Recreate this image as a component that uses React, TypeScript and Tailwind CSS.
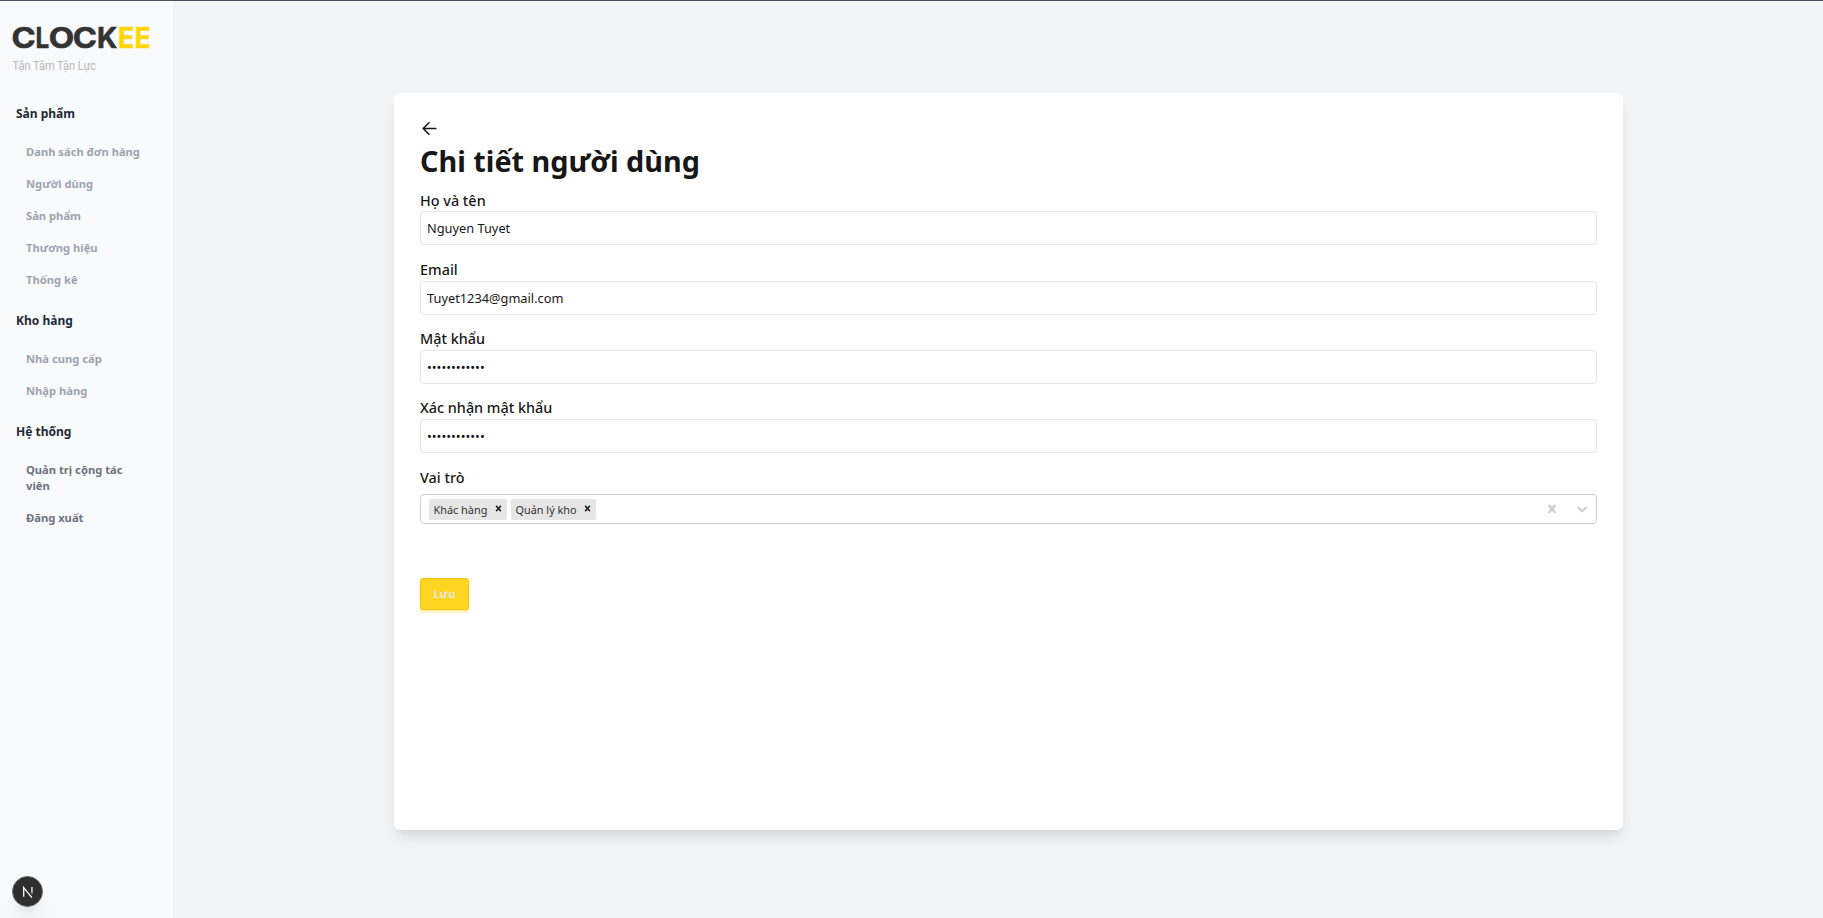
import { ReactNode } from "react";

type Section = { title: string; strong?: boolean; items: string[] };

const sections: Section[] = [
  { title: "Sản phẩm", items: ["Danh sách đơn hàng", "Người dùng", "Sản phẩm", "Thương hiệu", "Thống kê"] },
  { title: "Kho hàng", items: ["Nhà cung cấp", "Nhập hàng"] },
  { title: "Hệ thống", strong: true, items: ["Quản trị cộng tác viên", "Đăng xuất"] },
];

const wordmark = [
  { char: "C", x: -0.5, width: 24.2, fill: "#333333" },
  { char: "L", x: 23.6, width: 13.7, fill: "#333333" },
  { char: "O", x: 36.8, width: 25.5, fill: "#333333" },
  { char: "C", x: 60.8, width: 24.2, fill: "#333333" },
  { char: "K", x: 85, width: 20.3, fill: "#333333" },
  { char: "E", x: 106, width: 16.2, fill: "#ffd60a" },
  { char: "E", x: 122.8, width: 15.8, fill: "#ffd60a" },
];

function Logo() {
  return (
    <svg width="150" height="50" viewBox="0 0 150 50" className="ml-3 block overflow-visible">
      <g fontFamily="Inter" fontWeight="700" fontSize="28.6">
        {wordmark.map((l) => (
          <text key={l.x} x={l.x} y="25.2" textLength={l.width} lengthAdjust="spacingAndGlyphs" fill={l.fill} stroke={l.fill} strokeWidth="0.6">
            {l.char}
          </text>
        ))}
      </g>
      <text x="0.5" y="47" fontFamily="Roboto" fontSize="12" textLength="83.5" lengthAdjust="spacingAndGlyphs" fill="#b8b8b8">Tận Tâm Tận Lực</text>
    </svg>
  );
}

function Sidebar() {
  return (
    <aside className="flex w-[173px] shrink-0 flex-col bg-[#f9fafc]">
      <div className="h-[98px] pt-[22px]">
        <Logo />
      </div>
      <nav>
        {sections.map((s) => (
          <div key={s.title} className="mb-[10px]">
            <h2 className="mb-[7px] flex h-[30px] items-center pl-4 text-[12px] font-bold text-[#1f2937]">{s.title}</h2>
            {s.items.map((item) => (
              <a
                key={item}
                className={
                  "block py-2 pl-[26px] pr-8 text-[11.2px] font-bold leading-4 " +
                  (s.strong ? "text-[#6b7280]" : "text-[#9ca3af]")
                }
              >
                {item}
              </a>
            ))}
          </div>
        ))}
      </nav>
      <div className="mb-[11px] ml-3 mt-auto flex size-[31px] items-center justify-center rounded-full border border-[#6b6b6b] bg-[#2e2e2e] shadow-xl">
        <svg width="12" height="12" viewBox="0 0 12 12" fill="none">
          <defs>
            <linearGradient id="fade" x1="0" y1="0" x2="0" y2="1">
              <stop offset="0.5" stopColor="#fff" />
              <stop offset="1" stopColor="#fff" stopOpacity="0.1" />
            </linearGradient>
          </defs>
          <path d="M1.7 10.8V1.6L9.9 11.6" stroke="#fff" strokeWidth="1.3" />
          <path d="M9.3 1h1.3v8H9.3z" fill="url(#fade)" />
        </svg>
      </div>
    </aside>
  );
}

function Field({ label, children }: { label: string; children: ReactNode }) {
  return (
    <div className="flex flex-col">
      <label className="-mt-[0.55px] mb-[0.55px] h-[21px] text-[14.4px] font-medium leading-[21px]">{label}</label>
      {children}
    </div>
  );
}

function Input({ value, type = "text" }: { value: string; type?: string }) {
  return (
    <input
      type={type}
      defaultValue={value}
      className="h-[34px] w-full rounded-[4px] border border-gray-200 bg-white px-[6px] text-[12.8px] outline-none"
    />
  );
}

const CROSS =
  "M14.348 14.849c-0.469 0.469-1.229 0.469-1.697 0l-2.651-3.030-2.651 3.029c-0.469 0.469-1.229 0.469-1.697 0-0.469-0.469-0.469-1.229 0-1.697l2.758-3.15-2.759-3.152c-0.469-0.469-0.469-1.228 0-1.697s1.228-0.469 1.697 0l2.652 3.031 2.651-3.031c0.469-0.469 1.228-0.469 1.697 0s0.469 1.229 0 1.697l-2.758 3.152 2.758 3.15c0.469 0.469 0.469 1.229 0 1.698z";
const CHEVRON =
  "M4.516 7.548c0.436-0.446 1.043-0.481 1.576 0l3.908 3.747 3.908-3.747c0.533-0.481 1.141-0.446 1.574 0 0.436 0.445 0.408 1.197 0 1.615-0.406 0.418-4.695 4.502-4.695 4.502-0.217 0.223-0.502 0.335-0.787 0.335s-0.57-0.112-0.789-0.335c0 0-4.287-4.084-4.695-4.502s-0.436-1.17 0-1.615z";

function Glyph({ d, size }: { d: string; size: number }) {
  return (
    <svg width={size} height={size} viewBox="0 0 20 20" fill="currentColor" stroke="currentColor" strokeWidth="0.5" className="shrink-0">
      <path d={d} />
    </svg>
  );
}

function Tag({ text, width }: { text: string; width: string }) {
  return (
    <div className={"flex h-[21px] items-center justify-between rounded-[2px] bg-[#e6e6e6] pl-[4.5px] pr-[3px] " + width}>
      <span className="whitespace-nowrap pt-px text-[10.88px] leading-5 text-[#333333]">{text}</span>
      <span className="-mt-px text-[#1a1a1a]">
        <Glyph d={CROSS} size={11} />
      </span>
    </div>
  );
}

export default function App() {
  return (
    <div className="flex h-[918px] flex-col bg-[#f2f4f6] font-['Noto_Sans',sans-serif] text-[#171717]">
      <div className="h-px shrink-0 bg-[#4b5058]" />
      <div className="flex min-h-0 flex-1">
        <Sidebar />
        <main className="flex flex-1 justify-center pl-[21px] pt-[92px]">
          <section className="flex h-[737px] w-[1229px] flex-col items-stretch rounded-md bg-white px-[26px] pt-[26px] shadow-lg">
            <svg width="19" height="19" viewBox="0 0 24 24" fill="none" stroke="#171717" strokeWidth="2" strokeLinecap="round" strokeLinejoin="round">
              <path d="M20 12H4.5M11.3 19.3L4 12l7.3-7.3" />
            </svg>
            <h1 className="h-[52.4px] text-[28.8px] font-bold leading-[46px]">Chi tiết người dùng</h1>
            <div className="flex flex-col gap-[14.2px]">
              <Field label="Họ và tên"><Input value="Nguyen Tuyet" /></Field>
              <Field label="Email"><Input value="Tuyet1234@gmail.com" /></Field>
              <Field label="Mật khẩu"><Input type="password" value="abcdefghijkl" /></Field>
              <Field label="Xác nhận mật khẩu"><Input type="password" value="abcdefghijkl" /></Field>
              <Field label="Vai trò">
                <div className="mt-[6px] flex h-[30px] items-center gap-1 rounded-[4px] border border-[#cccccc] pl-2 pr-[6px]">
                  <Tag text="Khác hàng" width="w-[78px]" />
                  <Tag text="Quản lý kho" width="w-[85px]" />
                  <div className="ml-auto flex items-center gap-[14px] text-[#cccccc]">
                    <Glyph d={CROSS} size={16} />
                    <Glyph d={CHEVRON} size={16} />
                  </div>
                </div>
              </Field>
            </div>
            <button className="mt-[54px] flex h-8 w-[49px] items-center justify-center rounded-[3px] border border-[#f0c419] bg-[#ffd522] text-[11.2px] font-bold text-[#e8e3dc] shadow-[0_2px_3px_rgba(255,213,34,0.5)]">
              Lưu
            </button>
          </section>
        </main>
      </div>
    </div>
  );
}
